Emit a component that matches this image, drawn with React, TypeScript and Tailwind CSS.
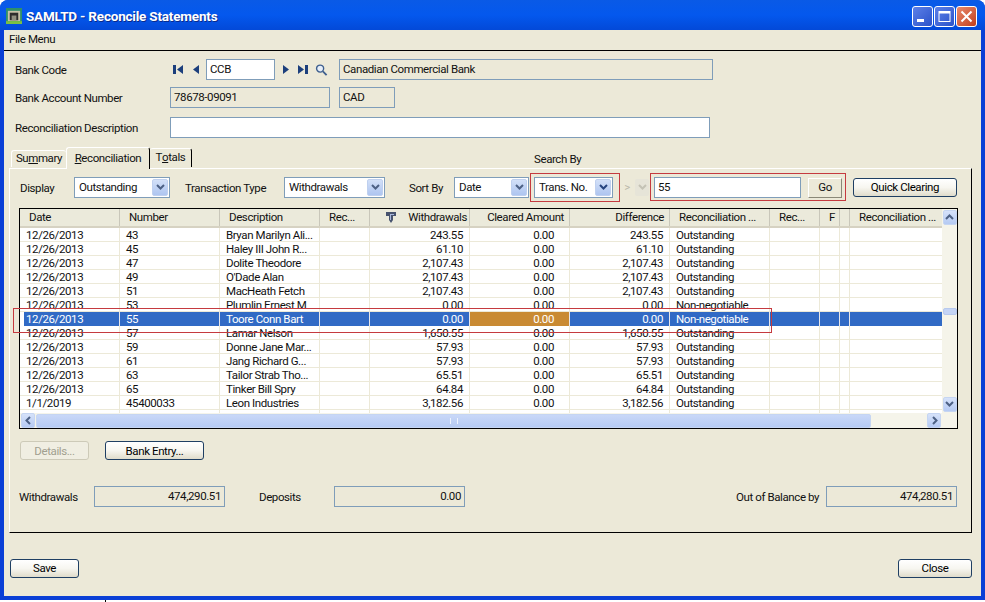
import * as React from "react";

interface Row {
    date: string;
    num: string;
    desc: string;
    wd: string;
    diff: string;
    status: string;
    selected?: boolean;
}

const rows: Row[] = [
    { date: "12/26/2013", num: "43", desc: "Bryan Marilyn Ali...", wd: "243.55", diff: "243.55", status: "Outstanding" },
    { date: "12/26/2013", num: "45", desc: "Haley III John R...", wd: "61.10", diff: "61.10", status: "Outstanding" },
    { date: "12/26/2013", num: "47", desc: "Dolite Theodore", wd: "2,107.43", diff: "2,107.43", status: "Outstanding" },
    { date: "12/26/2013", num: "49", desc: "O'Dade Alan", wd: "2,107.43", diff: "2,107.43", status: "Outstanding" },
    { date: "12/26/2013", num: "51", desc: "MacHeath Fetch", wd: "2,107.43", diff: "2,107.43", status: "Outstanding" },
    { date: "12/26/2013", num: "53", desc: "Plumlin Ernest M", wd: "0.00", diff: "0.00", status: "Non-negotiable" },
    { date: "12/26/2013", num: "55", desc: "Toore Conn Bart", wd: "0.00", diff: "0.00", status: "Non-negotiable", selected: true },
    { date: "12/26/2013", num: "57", desc: "Lamar Nelson", wd: "1,650.55", diff: "1,650.55", status: "Outstanding" },
    { date: "12/26/2013", num: "59", desc: "Donne Jane Mar...", wd: "57.93", diff: "57.93", status: "Outstanding" },
    { date: "12/26/2013", num: "61", desc: "Jang Richard G...", wd: "57.93", diff: "57.93", status: "Outstanding" },
    { date: "12/26/2013", num: "63", desc: "Tailor Strab Tho...", wd: "65.51", diff: "65.51", status: "Outstanding" },
    { date: "12/26/2013", num: "65", desc: "Tinker Bill Spry", wd: "64.84", diff: "64.84", status: "Outstanding" },
    { date: "1/1/2019", num: "45400033", desc: "Leon Industries", wd: "3,182.56", diff: "3,182.56", status: "Outstanding" },
];

const gridCols = "grid grid-cols-[100px_100px_100px_50px_100px_100px_100px_100px_50px_20px_10px_92px]";

function Chevron(props: { color?: string; dir?: "up" | "down" | "left" | "right" }) {
    const d = { down: "M1 2l3.5 3.5L8 2", up: "M1 6l3.5-3.5L8 6", left: "M6 1L2.5 4.5 6 8", right: "M3 1l3.5 3.5L3 8" }[props.dir || "down"];
    return (
        <svg width="9" height="9" viewBox="0 0 9 9" fill="none">
            <path d={d} stroke={props.color || "#4d6185"} strokeWidth="2" />
        </svg>
    );
}

function Combo(props: { text: string; w: string; active?: boolean }) {
    return (
        <div className={`${props.w} h-[21px] flex items-center bg-white border border-[#7f9db9] pl-1 pr-px`}>
            <span className="flex-1 truncate">{props.text}</span>
            <span className="w-[16px] h-[17px] rounded-[2px] bg-gradient-to-b from-[#d3e0f8] to-[#aec5f0] border border-[#bfd0ef] flex items-center justify-center">
                <Chevron color={props.active ? "#27457f" : "#4d6185"} />
            </span>
        </div>
    );
}

function XpButton(props: { text: string; w: string; disabled?: boolean; low?: boolean }) {
    const tone = props.disabled
        ? "border-[#cdcab8] text-[#a19f8f] bg-[#f0eee2]"
        : "border-[#1f3f63] bg-gradient-to-b from-white via-[#f7f6f0] to-[#e0dccb] text-black";
    return <div className={`${props.w} h-[19px] rounded-[3px] border flex items-center justify-center ${props.low ? "pt-[2px]" : ""} ${tone}`}>{props.text}</div>;
}

function Field(props: { text: string; w: string; right?: boolean }) {
    return (
        <div className={`${props.w} h-[21px] border border-[#7f9db9] bg-[#ece9d8] px-[3px] flex items-center ${props.right ? "justify-end" : ""}`}>
            {props.text}
        </div>
    );
}

function NavIcon(props: { kind: "first" | "prev" | "next" | "last" }) {
    const color = "#1c3f7c";
    return (
        <svg width="12" height="11" viewBox="0 0 12 11">
            {props.kind === "first" && <><rect x="1" y="1" width="3" height="9" fill={color} /><path d="M11 1v9L5 5.5z" fill={color} /></>}
            {props.kind === "prev" && <path d="M9 1v9L3 5.5z" fill={color} />}
            {props.kind === "next" && <path d="M3 1v9l6-4.5z" fill={color} />}
            {props.kind === "last" && <><rect x="8" y="1" width="3" height="9" fill={color} /><path d="M1 1v9l6-4.5z" fill={color} /></>}
        </svg>
    );
}

function ScrollBtn(props: { dir: "up" | "down" | "left" | "right" }) {
    return (
        <span className="w-[14px] h-[15px] shrink-0 rounded-[2px] bg-gradient-to-b from-[#d6e2fa] to-[#b5caf3] border border-[#c5d5f2] flex items-center justify-center">
            <Chevron dir={props.dir} />
        </span>
    );
}

function WindowButton(props: { kind: "min" | "max" | "close" }) {
    const bg = props.kind === "close" ? "from-[#e88a6c] to-[#c23c17]" : "from-[#5d80e8] to-[#2b52c9]";
    return (
        <div className={`w-[21px] h-[21px] rounded-[3px] border border-white bg-gradient-to-br ${bg} flex items-center justify-center`}>
            <svg width="15" height="15" viewBox="0 0 15 15">
                {props.kind === "min" && <rect x="2" y="10" width="7" height="3" fill="white" />}
                {props.kind === "max" && <><rect x="2" y="2.5" width="11" height="10" fill="none" stroke="white" /><rect x="2" y="2" width="11" height="2.5" fill="white" /></>}
                {props.kind === "close" && <path d="M2.5 2.5l10 10M12.5 2.5l-10 10" stroke="white" strokeWidth="2" />}
            </svg>
        </div>
    );
}

function HeaderCell(props: { text?: string; cls?: string; children?: React.ReactNode }) {
    return (
        <div className={`h-full flex items-center border-r border-[#c9c7ba] overflow-hidden whitespace-nowrap ${props.cls || ""}`}>
            {props.children}
            {props.text}
        </div>
    );
}

function GridTable() {
    return (
        <div className="ml-[9px] mt-[10px] w-[939px] h-[221px] border border-black bg-white flex flex-col">
            <div className="flex flex-1 min-h-0">
                <div className="w-[922px] flex flex-col">
                    <div className={`${gridCols} h-[19px] shrink-0 bg-[#ebeadb] border-b-2 border-[#d6d2c2] items-center`}>
                        <HeaderCell text="Date" cls="pl-[9px]" />
                        <HeaderCell text="Number" cls="pl-[9px]" />
                        <HeaderCell text="Description" cls="pl-[9px]" />
                        <HeaderCell text="Rec..." cls="pl-[9px]" />
                        <HeaderCell cls="justify-between pl-[15px] pr-[2px]">
                            <svg width="12" height="13" viewBox="0 0 12 13">
                                <path d="M1 1h10v4H8v4L6 12 4 9V5H1z" fill="#47536e" />
                                <path d="M5 3h4v1H6v5H5z" fill="#a9b8dc" />
                            </svg>
                            <span>Withdrawals</span>
                        </HeaderCell>
                        <HeaderCell text="Cleared Amount" cls="justify-end pr-[5px]" />
                        <HeaderCell text="Difference" cls="justify-end pr-[5px]" />
                        <HeaderCell text="Reconciliation ..." cls="pl-[9px]" />
                        <HeaderCell text="Rec..." cls="pl-[9px]" />
                        <HeaderCell text="F" cls="pl-[9px]" />
                        <HeaderCell />
                        <HeaderCell text="Reconciliation ..." cls="pl-[9px] border-r-0" />
                    </div>
                    <div className="flex-1 min-h-0 overflow-hidden">
                        {rows.map(r => <TableRow row={r} key={r.num} />)}
                        <TableRow />
                    </div>
                </div>
                <div className="w-[15px] flex flex-col items-center pt-px pb-px bg-[#f5f4ea]">
                    <ScrollBtn dir="up" />
                    <div className="flex-1 w-[14px] pt-[83px]">
                        <div className="w-[14px] h-[7px] rounded-[2px] bg-[#c4d4f5] border border-[#b7c9ee]" />
                    </div>
                    <ScrollBtn dir="down" />
                </div>
            </div>
            <div className="h-[15px] shrink-0 flex items-center pl-px pr-[16px] bg-[#f5f4ea]">
                <ScrollBtn dir="left" />
                <div className="w-[835px] h-[14px] ml-[1px] rounded-[2px] bg-gradient-to-b from-[#c9d8f8] to-[#b5caf3] border border-[#c5d5f2] flex items-center justify-center">
                    <span className="w-[8px] h-[6px] border-x border-[#eef3fd]" />
                </div>
                <div className="flex-1" />
                <ScrollBtn dir="right" />
            </div>
        </div>
    );
}

function TableRow(props: { row?: Row }) {
    const r = props.row;
    const sel = r?.selected;
    const cell = `h-[14px] overflow-hidden whitespace-nowrap leading-[14px] border-r ${sel ? "border-[#e6e6ea] bg-[#316ac5] text-white" : "border-[#ece9d8]"}`;
    return (
        <div className={`${gridCols} h-[14px] border-b border-[#ece9d8] relative ${sel ? "border-b-0" : ""}`}>
            <div className={`${cell} pl-[6px] ${sel ? "shadow-[inset_4px_0_0_white]" : ""}`}>{r?.date}</div>
            <div className={`${cell} pl-[6px]`}>{r?.num}</div>
            <div className={`${cell} pl-[6px]`}>{r?.desc}</div>
            <div className={cell}></div>
            <div className={`${cell} text-right pr-[6px]`}>{r?.wd}</div>
            <div className={`${cell} text-right pr-[15px] ${sel ? "!bg-[#c98a33]" : ""}`}>{r ? "0.00" : ""}</div>
            <div className={`${cell} text-right pr-[6px]`}>{r?.diff}</div>
            <div className={`${cell} pl-[6px]`}>{r?.status}</div>
            <div className={cell}></div>
            <div className={cell}></div>
            <div className={cell}></div>
            <div className={`${cell} border-r-0`}></div>
        </div>
    );
}

export default function App() {
    return (
        <div className="relative w-[985px] h-[602px] bg-white overflow-hidden text-[11.5px] tracking-[-0.4px] text-[#111] [font-family:Roboto,sans-serif]">
            <div className="h-[600px] rounded-t-[8px] bg-[#0a3fd6] flex flex-col px-[4px] pb-[4px]">
                <div className="-mx-[4px] h-[30px] pt-[2px] shrink-0 rounded-t-[8px] bg-gradient-to-b from-[#0a5ae6] via-[#0458ee] to-[#0349d8] flex items-center pl-[6px] pr-[8px]">
                    <svg width="16" height="16" viewBox="0 0 17 17">
                        <rect width="17" height="17" fill="#2f8f6a" />
                        <rect x="2" y="3" width="13" height="11" fill="#c7c2a8" />
                        <rect x="4" y="5" width="9" height="8" fill="#2c2c2c" />
                        <rect x="6" y="8" width="5" height="5" fill="#8f8f80" />
                        <rect y="14" width="17" height="3" fill="#7bc043" />
                    </svg>
                    <span className="ml-[4px] text-white font-bold text-[13.5px] tracking-[-0.2px] [text-shadow:1px_1px_#0a2a8a]">SAMLTD - Reconcile Statements</span>
                    <div className="ml-auto flex gap-[1px]">
                        <WindowButton kind="min" />
                        <WindowButton kind="max" />
                        <WindowButton kind="close" />
                    </div>
                </div>

                <div className="flex-1 bg-[#ece9d8] flex flex-col">
                    <div className="h-[21px] shrink-0 border-b border-black pl-[5px] flex items-center">File Menu</div>

                    <div className="flex items-center h-[21px] mt-[8px] pl-[11px]">
                        <span className="w-[157px] pt-[2px]">Bank Code</span>
                        <span className="flex gap-[6px] w-[34px]">
                            <NavIcon kind="first" />
                            <NavIcon kind="prev" />
                        </span>
                        <div className="w-[69px] h-[21px] bg-white border border-[#7f9db9] px-[3px] flex items-center">CCB</div>
                        <span className="flex items-center gap-[5px] ml-[5px] w-[59px]">
                            <NavIcon kind="next" />
                            <NavIcon kind="last" />
                            <svg className="ml-px" width="13" height="14" viewBox="0 0 14 14" fill="none">
                                <circle cx="5.5" cy="5.5" r="3.8" stroke="#3e5f8e" strokeWidth="1.5" fill="#e6eef8" />
                                <path d="M8.5 8.5l4 4" stroke="#3e5f8e" strokeWidth="2" />
                            </svg>
                        </span>
                        <Field text="Canadian Commercial Bank" w="w-[374px]" />
                    </div>
                    <div className="flex items-center h-[21px] mt-[7px] pl-[11px]">
                        <span className="w-[155px] pt-[2px]">Bank Account Number</span>
                        <Field text="78678-09091" w="w-[160px]" />
                        <span className="w-[9px]" />
                        <Field text="CAD" w="w-[56px]" />
                    </div>
                    <div className="flex items-center h-[21px] mt-[9px] pl-[11px]">
                        <span className="w-[155px] pt-[2px]">Reconciliation Description</span>
                        <div className="w-[540px] h-[21px] bg-white border border-[#7f9db9]" />
                    </div>

                    <div className="flex items-end h-[22px] mt-[8px] pl-[7px] relative z-10">
                        <div className="w-[55px] h-[17px] mb-px bg-[#ece9d8] border-t border-l border-white rounded-t-[3px] flex items-center justify-center">Su<u>m</u>mary</div>
                        <div className="w-[84px] h-[22px] -mb-px bg-[#ece9d8] border-t border-l border-white border-r border-r-black rounded-t-[3px] flex items-center justify-center"><u>R</u>econciliation</div>
                        <div className="w-[42px] h-[19px] mb-px bg-[#ece9d8] border-t border-white border-r border-r-black rounded-t-[3px] flex items-center justify-center">T<u>o</u>tals</div>
                        <span className="ml-[342px]">Search By</span>
                    </div>

                    <div className="ml-[5px] w-[963px] h-[365px] border-t border-l border-white border-r border-r-black border-b border-b-black">
                        <div className="flex items-center h-[21px] mt-[8px] pl-[9px]">
                            <span className="w-[55px] pl-px pt-[2px]">Display</span>
                            <Combo text="Outstanding" w="w-[96px]" />
                            <span className="ml-[15px] w-[99px] pt-[2px]">Transaction Type</span>
                            <Combo text="Withdrawals" w="w-[101px]" />
                            <span className="ml-[24px] w-[45px] pt-[2px]">Sort By</span>
                            <Combo text="Date" w="w-[75px]" />
                            <span className="w-[5px]" />
                            <Combo text="Trans. No." w="w-[79px]" active />
                            <span className="ml-[8px] w-[12px] h-[21px] text-[#b9b7a9] flex items-center justify-center">&gt;</span>
                            <span className="ml-[2px] w-[14px] h-[17px] rounded-[2px] bg-[#e6e4d8] flex items-center justify-center"><Chevron color="#c4c2b5" /></span>
                            <div className="ml-[5px] w-[147px] h-[21px] bg-white border border-[#7f9db9] px-[3px] flex items-center">55</div>
                            <div className="ml-[7px] w-[34px] h-[20px] bg-[#ece9d8] border border-white border-r-[#8a8878] border-b-[#8a8878] flex items-center justify-center">Go</div>
                            <span className="w-[11px]" />
                            <XpButton text="Quick Clearing" w="w-[104px]" />
                        </div>

                        <GridTable />

                        <div className="flex gap-[16px] mt-[12px] pl-[10px]">
                            <XpButton text="Details..." w="w-[69px]" disabled low />
                            <XpButton text="Bank Entry..." w="w-[99px]" low />
                        </div>

                        <div className="flex items-center h-[21px] mt-[26px] pl-[9px]">
                            <span className="w-[75px] pt-[2px]">Withdrawals</span>
                            <Field text="474,290.51" w="w-[131px]" right />
                            <span className="ml-[34px] w-[75px] pt-[2px]">Deposits</span>
                            <Field text="0.00" w="w-[131px]" right />
                            <span className="ml-[271px] w-[90px] pt-[2px] whitespace-nowrap">Out of Balance by</span>
                            <Field text="474,280.51" w="w-[131px]" right />
                        </div>
                    </div>

                    <div className="flex justify-between mt-[26px] pl-[6px] pr-[9px]">
                        <XpButton text="Save" w="w-[69px]" />
                        <XpButton text="Close" w="w-[74px]" />
                    </div>
                </div>
            </div>

            <div className="absolute left-[530px] top-[173px] w-[90px] h-[29px] border border-[#c53a3f]" />
            <div className="absolute left-[650px] top-[173px] w-[196px] h-[28px] border border-[#c53a3f]" />
            <div className="absolute left-[13px] top-[308px] w-[759px] h-[25px] border border-[#c53a3f]" />
            <div className="absolute left-[105px] top-[600px] w-px h-[2px] bg-black" />
        </div>
    );
}
